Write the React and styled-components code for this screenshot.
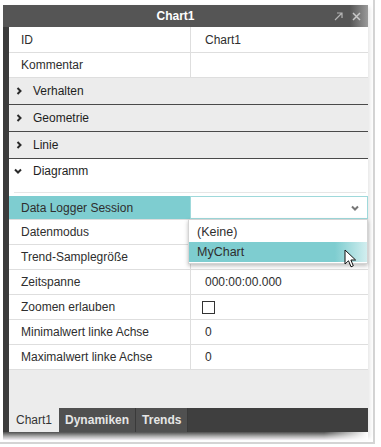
import styled, { createGlobalStyle } from "styled-components";

const GlobalStyle = createGlobalStyle`
  html, body {
    margin: 0;
    padding: 0;
    background: #ffffff;
  }
  body {
    font-family: "Liberation Sans", Arial, sans-serif;
    font-size: 12px;
    color: #2e2e2e;
  }
`;

const Chevron = ({ open }) => (
  <svg width="8" height="8" viewBox="0 0 8 8">
    {open ? (
      <path d="M1 2.5 L4 5.5 L7 2.5" fill="none" stroke="#2a2a2a" strokeWidth="2" />
    ) : (
      <path d="M2.5 1 L5.5 4 L2.5 7" fill="none" stroke="#2a2a2a" strokeWidth="2" />
    )}
  </svg>
);

const PopOutIcon = () => (
  <svg width="9" height="9" viewBox="0 0 9 9">
    <path d="M1 8 L7.5 1.5 M3 1 H8 V6" fill="none" stroke="#b4b4b4" strokeWidth="1.2" />
  </svg>
);

const CloseIcon = () => (
  <svg width="9" height="9" viewBox="0 0 9 9">
    <path d="M1 1 L8 8 M8 1 L1 8" fill="none" stroke="#c8c8c8" strokeWidth="1.5" />
  </svg>
);

const Cursor = () => (
  <svg width="14" height="20" viewBox="0 0 14 20">
    <path
      d="M1 1 L1 15 L4.5 11.8 L7 17.8 L9.3 16.8 L6.9 11 L11.6 11 Z"
      fill="#fff"
      stroke="#111"
      strokeWidth="1"
      strokeLinejoin="round"
    />
  </svg>
);

const properties = [
  { label: "Datenmodus", value: "" },
  { label: "Trend-Samplegröße", value: "100" },
  { label: "Zeitspanne", value: "000:00:00.000" },
  { label: "Zoomen erlauben", check: true },
  { label: "Minimalwert linke Achse", value: "0" },
  { label: "Maximalwert linke Achse", value: "0" },
];

const App = () => (
  <>
    <GlobalStyle />
    <Screen>
      <Window>
        <TitleBar>
          <Title>Chart1</Title>
          <TitleIcons>
            <PopOutIcon />
            <CloseIcon />
          </TitleIcons>
        </TitleBar>
        <Body>
          <PropRow $h={26}>
            <Label>ID</Label>
            <Value>Chart1</Value>
          </PropRow>
          <PropRow>
            <Label>Kommentar</Label>
            <Value />
          </PropRow>
          {["Verhalten", "Geometrie", "Linie"].map((name) => (
            <SectionHead key={name}>
              <Chevron />
              <span>{name}</span>
            </SectionHead>
          ))}
          <GroupHead>
            <Chevron open />
            <span>Diagramm</span>
          </GroupHead>
          <GroupRule />
          <PropRow $h={24} $active>
            <Label>Data Logger Session</Label>
            <SelectCell>
              <SelectBox>
                <Chevron open />
              </SelectBox>
              <DropList>
                <DropItem>(Keine)</DropItem>
                <DropItem $hover>MyChart</DropItem>
                <CursorSpot>
                  <Cursor />
                </CursorSpot>
              </DropList>
            </SelectCell>
          </PropRow>
          {properties.map((p) => (
            <PropRow key={p.label}>
              <Label>{p.label}</Label>
              <Value>{p.check ? <CheckBox /> : p.value}</Value>
            </PropRow>
          ))}
          <Filler />
          <TabBar>
            <Tab $active>Chart1</Tab>
            <Tab>Dynamiken</Tab>
            <Tab>Trends</Tab>
          </TabBar>
        </Body>
        <Shade />
      </Window>
    </Screen>
  </>
);

export default App;

const Screen = styled.div`
  position: relative;
  width: 375px;
  height: 444px;
  border-right: 2px solid #d4d4d4;
  border-bottom: 2px solid #d4d4d4;
  padding-top: 5px;
  padding-left: 3px;
  box-sizing: border-box;
`;

const Window = styled.div`
  width: 365px;
  box-shadow: 4px 0 4px -2px rgba(0, 0, 0, 0.1);
`;

const TitleBar = styled.div`
  display: flex;
  align-items: center;
  height: 22px;
  background: linear-gradient(to right, #555 0%, #555 95%, #9a9a9a 100%);
  color: #fff;
`;

const Title = styled.div`
  flex: 1;
  text-align: center;
  font-weight: bold;
  font-size: 12px;
  padding-left: 30px;
`;

const TitleIcons = styled.div`
  display: flex;
  align-items: center;
  gap: 9px;
  padding-right: 7px;
  width: 50px;
  justify-content: flex-end;
  box-sizing: border-box;
`;

const Body = styled.div`
  border-left: 6px solid #3b3b3b;
  background: #fff;
`;

const PropRow = styled.div`
  display: grid;
  grid-template-columns: 181px 1fr;
  height: ${(p) => p.$h || 25}px;
  box-sizing: border-box;
  border-bottom: 1px solid #dedede;
  background: ${(p) => (p.$active ? "#7ecdd0" : "#fff")};
  position: relative;
`;

const Label = styled.div`
  display: flex;
  align-items: center;
  padding-left: 12px;
  white-space: nowrap;
`;

const Value = styled.div`
  display: flex;
  align-items: center;
  padding-left: 14px;
  border-left: 1px solid #dedede;
  background: #fff;
`;

const SectionHead = styled.div`
  display: flex;
  align-items: center;
  gap: 10px;
  height: 27px;
  box-sizing: border-box;
  padding-left: 6px;
  background: #ececec;
  border-bottom: 1px solid #4a4a4a;
  color: #1e1e1e;
`;

const GroupHead = styled(SectionHead)`
  background: #fff;
  border-bottom: none;
  height: 23px;
  padding-left: 5px;
  gap: 11px;
`;

const GroupRule = styled.div`
  margin: 10px 2px 3px 5px;
  border-top: 1px solid #e6e6e6;
`;

const SelectCell = styled.div`
  position: relative;
  background: #fff;
`;

const SelectBox = styled.div`
  display: flex;
  align-items: center;
  justify-content: flex-end;
  height: 100%;
  box-sizing: border-box;
  padding-right: 8px;
  border: 1px solid #9fd9db;
  background: #fff;

  svg path {
    stroke: #777;
  }
`;

const DropList = styled.div`
  position: absolute;
  top: 23px;
  left: -2px;
  width: 178px;
  padding: 2px 0 1px;
  background: #fff;
  border: 1px solid #d4d4d4;
  box-shadow: 0 2px 4px rgba(0, 0, 0, 0.25);
  z-index: 2;
`;

const DropItem = styled.div`
  height: 20px;
  display: flex;
  align-items: center;
  padding-left: 8px;
  font-size: 12.5px;
  background: ${(p) =>
    p.$hover
      ? "linear-gradient(to right, #7ecdd0 0%, #7ecdd0 82%, #d2eeef 100%)"
      : "#fff"};
`;

const CursorSpot = styled.div`
  position: absolute;
  left: 155px;
  top: 29px;
`;

const CheckBox = styled.div`
  width: 11px;
  height: 11px;
  margin-left: -3px;
  border: 1px solid #333;
  background: #fff;
`;

const Filler = styled.div`
  height: 38px;
  background: #ececec;
`;

const TabBar = styled.div`
  display: flex;
  height: 24px;
  background: #3f3f3f;
`;

const Tab = styled.div`
  display: flex;
  align-items: center;
  padding: 0 ${(p) => (p.$active ? "7px" : "6px")};
  height: 100%;
  box-sizing: border-box;
  background: ${(p) => (p.$active ? "#ececec" : "#505050")};
  color: ${(p) => (p.$active ? "#333" : "#e6e6e6")};
  font-weight: ${(p) => (p.$active ? "normal" : "bold")};
  border-right: ${(p) => (p.$active ? "none" : "1px solid #3a3a3a")};
  min-width: ${(p) => (p.$active ? "49px" : "0")};
`;

const Shade = styled.div`
  height: 8px;
  background: linear-gradient(to bottom, #4e4e4e 0%, #b0b0b0 55%, #f4f0f6 100%);
  -webkit-mask-image: linear-gradient(to right, #000 88%, transparent 100%);
  mask-image: linear-gradient(to right, #000 88%, transparent 100%);
`;
